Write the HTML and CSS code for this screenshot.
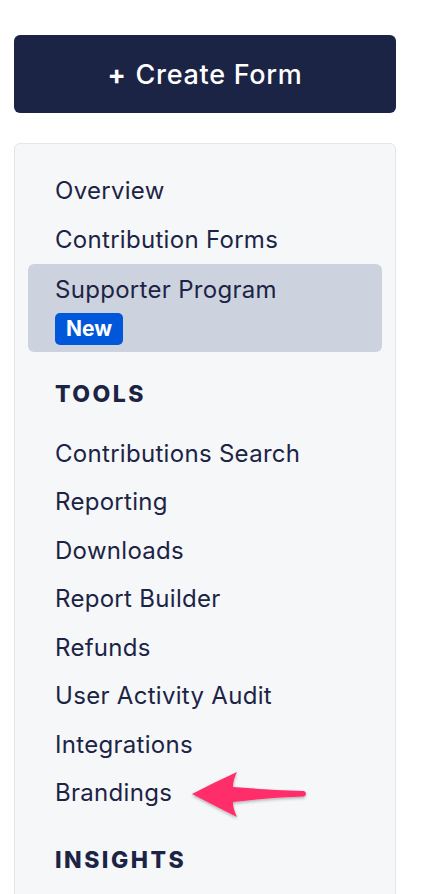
FILE: index.html
```html
<!DOCTYPE html>
<html>
<head>
<meta charset="utf-8">
<link rel="stylesheet" href="styles.css">
</head>
<body>
<div class="sidebar">
  <button class="create-btn"><span class="plus">+</span> Create Form</button>
  <nav class="panel">
    <a class="item">Overview</a>
    <a class="item">Contribution Forms</a>
    <a class="item active">Supporter Program<span class="badge">New</span></a>
    <div class="heading">TOOLS</div>
    <a class="item">Contributions Search</a>
    <a class="item">Reporting</a>
    <a class="item">Downloads</a>
    <a class="item">Report Builder</a>
    <a class="item">Refunds</a>
    <a class="item">User Activity Audit</a>
    <a class="item">Integrations</a>
    <a class="item branding">Brandings
      <svg class="arrow" width="130" height="60" viewBox="0 0 130 60">
        <defs>
          <filter id="sh" x="-20%" y="-30%" width="140%" height="160%">
            <feDropShadow dx="0" dy="1.5" stdDeviation="1.5" flood-color="#000" flood-opacity="0.3"/>
          </filter>
        </defs>
        <path filter="url(#sh)" fill="#ff2d6b" d="M7 28 Q30 16 52 6 Q48 14 48 21 Q85 24 119 25 Q123 27.5 119 30.5 Q85 31.5 48 36 Q48 43 52 51 Q30 40 7 28 Z"/>
      </svg>
    </a>
    <div class="heading">INSIGHTS</div>
  </nav>
</div>
</body>
</html>
```
FILE: styles.css
```css
html, body {
  margin: 0;
  padding: 0;
  background: #ffffff;
  font-family: Inter, "Noto Sans", sans-serif;
  color: #1c2445;
}
.sidebar {
  padding: 35px 26px 0 14px;
  display: flex;
  flex-direction: column;
  gap: 30px;
}
.create-btn {
  height: 78px;
  width: 100%;
  border: none;
  border-radius: 6px;
  background: #1c2445;
  color: #ffffff;
  font-family: Inter, "Noto Sans", sans-serif;
  font-size: 27px;
  font-weight: 500;
  letter-spacing: 0.7px;
  display: flex;
  align-items: center;
  justify-content: center;
}
.plus {
  font-weight: 700;
  margin-right: 9px;
}
.panel {
  background: #f6f7f9;
  border: 1px solid #e3e6eb;
  border-radius: 6px;
  padding: 23px 13px 40px 13px;
  display: flex;
  flex-direction: column;
}
.item {
  display: block;
  position: relative;
  font-size: 24px;
  letter-spacing: 0.3px;
  line-height: 32.5px;
  padding: 8px 27px;
  color: #1c2445;
}
.item.active {
  background: #cdd3de;
  border-radius: 6px;
  padding-top: 10px;
  padding-bottom: 7px;
}
.badge {
  display: block;
  width: max-content;
  margin-top: 6px;
  background: #0057d9;
  color: #ffffff;
  font-weight: 700;
  font-size: 21px;
  letter-spacing: 0;
  line-height: 32px;
  padding: 0 11px;
  border-radius: 5px;
}
.heading {
  font-size: 23px;
  font-weight: 800;
  letter-spacing: 2.5px;
  line-height: 36px;
  padding: 0 27px;
  margin: 24px 0 18px;
}
.arrow {
  position: absolute;
  left: 157px;
  top: -3px;
}
```
